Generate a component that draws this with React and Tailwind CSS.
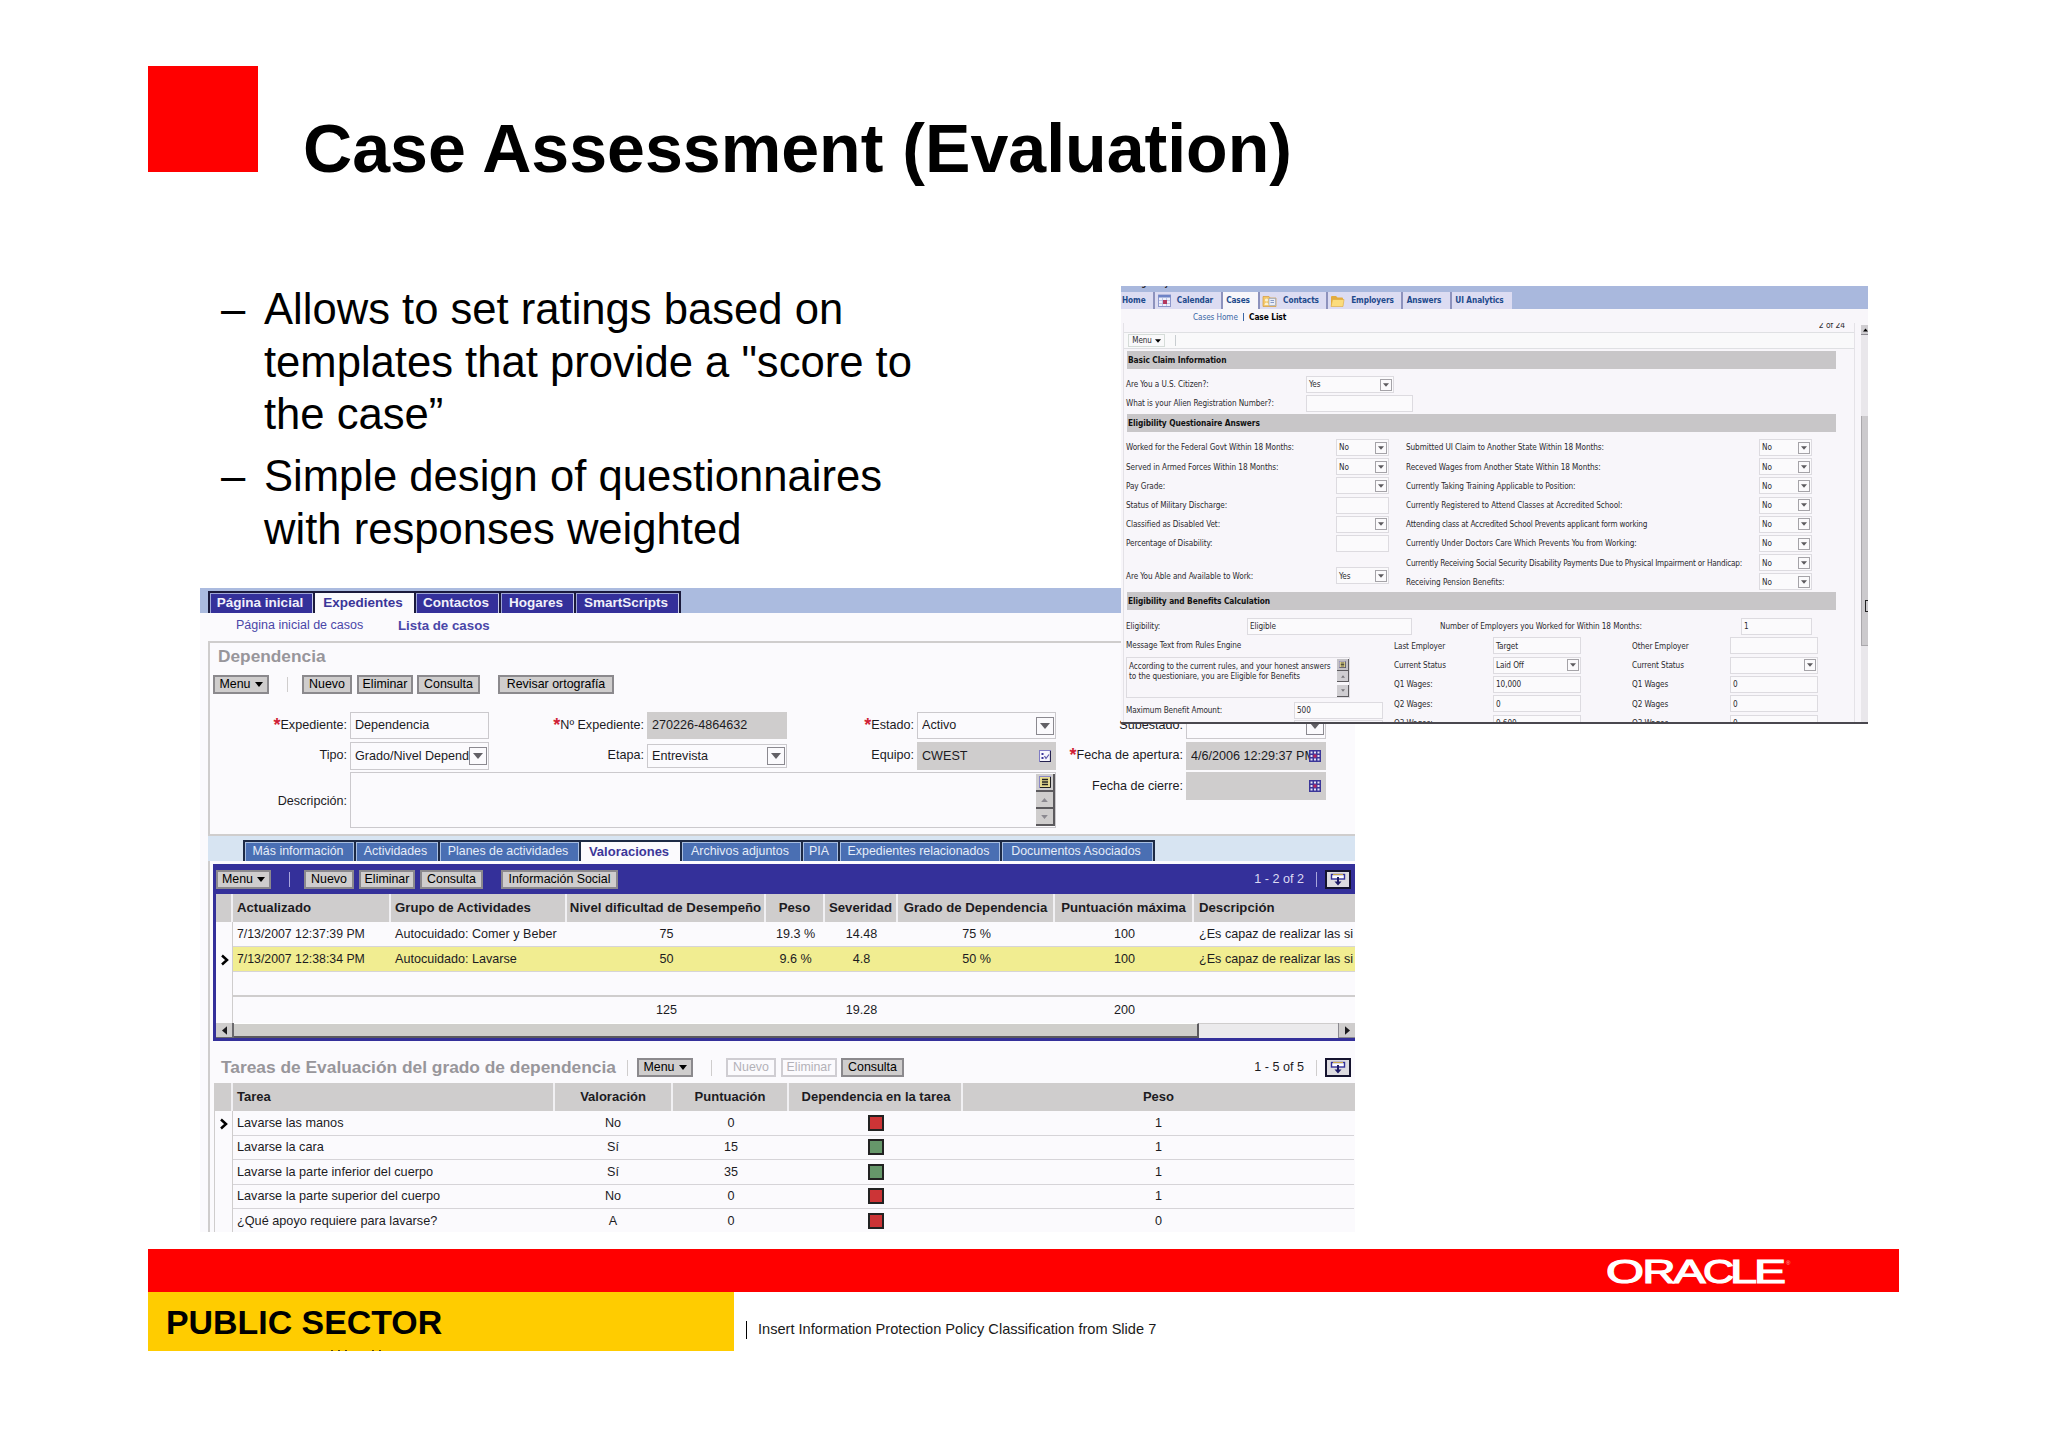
const mainTabs = [
  { label: 'Página inicial', width: 'w-[105px]' },
  { label: 'Expedientes', width: 'w-[101px]', active: true },
  { label: 'Contactos', width: 'w-[85px]' },
  { label: 'Hogares', width: 'w-[75px]' },
  { label: 'SmartScripts', width: 'w-[105px]' },
];

const subTabs = [
  { label: 'Más información', width: 'w-[111px]' },
  { label: 'Actividades', width: 'w-[84px]' },
  { label: 'Planes de actividades', width: 'w-[141px]' },
  { label: 'Valoraciones', width: 'w-[101px]', active: true },
  { label: 'Archivos adjuntos', width: 'w-[121px]' },
  { label: 'PIA', width: 'w-[37px]' },
  { label: 'Expedientes relacionados', width: 'w-[162px]' },
  { label: 'Documentos Asociados', width: 'w-[153px]' },
];

const ratings = [
  { date: '7/13/2007 12:37:39 PM', group: 'Autocuidado: Comer y Beber', level: '75', weight: '19.3 %', severity: '14.48', grade: '75 %', max: '100', desc: '¿Es capaz de realizar las si' },
  { date: '7/13/2007 12:38:34 PM', group: 'Autocuidado: Lavarse', level: '50', weight: '9.6 %', severity: '4.8', grade: '50 %', max: '100', desc: '¿Es capaz de realizar las si', selected: true },
];

const tasks = [
  { name: 'Lavarse las manos', value: 'No', score: '0', ok: false, weight: '1' },
  { name: 'Lavarse la cara', value: 'Sí', score: '15', ok: true, weight: '1' },
  { name: 'Lavarse la parte inferior del cuerpo', value: 'Sí', score: '35', ok: true, weight: '1' },
  { name: 'Lavarse la parte superior del cuerpo', value: 'No', score: '0', ok: false, weight: '1' },
  { name: '¿Qué apoyo requiere para lavarse?', value: 'A', score: '0', ok: false, weight: '0' },
];

const leftQuestions = [
  { label: 'Worked for the Federal Govt Within 18 Months:', value: 'No', select: true },
  { label: 'Served in Armed Forces Within 18 Months:', value: 'No', select: true },
  { label: 'Pay Grade:', value: '', select: true },
  { label: 'Status of Military Discharge:', value: '' },
  { label: 'Classified as Disabled Vet:', value: '', select: true },
  { label: 'Percentage of Disability:', value: '' },
];

const rightQuestions = [
  'Submitted UI Claim to Another State Within 18 Months:',
  'Receved Wages from Another State Within 18 Months:',
  'Currently Taking Training Applicable to Position:',
  'Currently Registered to Attend Classes at Accredited School:',
  'Attending class at Accredited School Prevents applicant form working',
  'Currently Under Doctors Care Which Prevents You from Working:',
  'Currently Receiving Social Security Disability Payments Due to Physical Impairment or Handicap:',
  'Receiving Pension Benefits:',
];

const lastEmployer = [
  { label: 'Last Employer', value: 'Target' },
  { label: 'Current Status', value: 'Laid Off', select: true },
  { label: 'Q1 Wages:', value: '10,000' },
  { label: 'Q2 Wages:', value: '0' },
  { label: 'Q3 Wages:', value: '9,600' },
];

const otherEmployer = [
  { label: 'Other Employer', value: '' },
  { label: 'Current Status', value: '', select: true },
  { label: 'Q1 Wages', value: '0' },
  { label: 'Q2 Wages', value: '0' },
  { label: 'Q3 Wages', value: '0' },
];

const ratingCols = 'grid grid-cols-[17px_158px_176px_199px_59px_73px_157px_139px_161px]';
const taskCols = 'grid grid-cols-[18px_322px_118px_116px_174px_391px]';

/* ---------- icons ---------- */

function Caret({ className }) {
  return (
    <svg viewBox="0 0 10 6" className={className}>
      <path d="M0 0h10L5 6z" fill="currentColor" />
    </svg>
  );
}

function Marker() {
  return (
    <svg viewBox="0 0 9 12" className="ml-0.5 h-3 w-[9px]">
      <path d="M1 1.500L6 6L1 10.500" fill="none" stroke="#000" strokeWidth="2.500" />
    </svg>
  );
}

function CalendarPicker() {
  return (
    <svg viewBox="0 0 12 12" className="h-3 w-3 shrink-0">
      <rect width="12" height="12" fill="#3b3699" />
      <path d="M1.500 1.500h2v2h-2zM5 1.500h2v2H5zM8.500 1.500h2v2h-2zM1.500 5h2v2h-2zM8.500 5h2v2H8.500zM1.500 8.500h2v2h-2zM5 8.500h2v2H5zM8.500 8.500h2v2h-2z" fill="#e4e2f6" />
      <path d="M4.500 4.500h3v3h-3z" fill="#c0265a" />
    </svg>
  );
}

function MultiPick() {
  return (
    <svg viewBox="0 0 12 12" className="h-3 w-3 shrink-0">
      <rect x=".5" y=".5" width="11" height="11" fill="#f7f6fd" stroke="#7f7cc4" />
      <path d="M11.500 1v10.500H1" fill="none" stroke="#25224f" strokeWidth="1.200" />
      <path d="M2.500 3h2v2h-2zM2.500 7h2v2h-2z" fill="#3b3699" />
      <path d="M5.500 6l1.500 2.500L10 4.500" fill="none" stroke="#5b57a8" strokeWidth="1.200" />
    </svg>
  );
}

function NoteIcon({ className }) {
  return (
    <svg viewBox="0 0 12 12" className={className}>
      <rect x=".5" y=".5" width="11" height="11" fill="#e8dc90" stroke="#8a87c8" />
      <path d="M11.500 1v10.500H1" fill="none" stroke="#222" />
      <path d="M3 3.500h6M3 6h6M3 8.500h6" stroke="#222" strokeWidth="1.300" />
    </svg>
  );
}

function ShowMore() {
  return (
    <div className="flex h-[19px] w-[26px] items-center justify-center border-2 border-[#15132f] bg-[#dddbe0]">
      <svg viewBox="0 0 16 13" className="h-[13px] w-4">
        <rect x="1.500" y="1.500" width="13" height="4.500" fill="#fff" stroke="#34309a" strokeWidth="1.400" />
        <path d="M3 1.500h10" stroke="#c9a64a" />
        <path d="M8 4v5" stroke="#1d1a66" strokeWidth="2" />
        <path d="M4.500 8.500h7L8 12.500z" fill="#1d1a66" />
      </svg>
    </div>
  );
}

function TabCalendarIcon() {
  return (
    <svg viewBox="0 0 13 13" className="h-[13px] w-[13px]">
      <rect x=".5" y="1" width="12" height="11.500" fill="#eef0fb" stroke="#8d97cb" />
      <rect x=".5" y="1" width="12" height="2.500" fill="#6d83c6" />
      <path d="M4.500 4v8M8.500 4v8M1 6.500h11M1 9.500h11" stroke="#aab2dc" strokeWidth=".7" />
      <rect x="5" y="6" width="4" height="4" fill="#b3375e" />
    </svg>
  );
}

function TabContactIcon() {
  return (
    <svg viewBox="0 0 15 12" className="h-3 w-[15px]">
      <path d="M1 1.500h6l1 1.500h6v8.500H1z" fill="#f3c86a" stroke="#d59b3e" strokeWidth=".7" />
      <rect x="7" y="3.500" width="6.500" height="7" fill="#e9edf7" stroke="#8ba0c8" strokeWidth=".6" />
      <circle cx="4.500" cy="5" r="1.600" fill="#fbf1d2" />
      <path d="M2.500 10c0-3.500 4-3.500 4 0z" fill="#fbf1d2" />
      <path d="M8.500 5.500h3.500M8.500 7.500h3.500" stroke="#6f86b8" strokeWidth=".8" />
    </svg>
  );
}

function TabFolderIcon() {
  return (
    <svg viewBox="0 0 15 12" className="h-3 w-[15px]">
      <path d="M1 11V2q0-1 1-1h4l1.500 1.500H12q1 0 1 1V11z" fill="#e3ac3f" />
      <path d="M2.500 4.500h11.500l-1 7H1z" fill="#fbdc7c" stroke="#dba63c" strokeWidth=".6" />
    </svg>
  );
}

function OracleLogo() {
  return (
    <svg viewBox="0 0 186 30" className="h-[30px] w-[186px]">
      <text y="27" fill="#fff" stroke="#fff" strokeWidth="1.200" className="font-['Liberation_Sans'] text-[32.500px]">
        <tspan x="-1" textLength="38" lengthAdjust="spacingAndGlyphs">O</tspan>
        <tspan x="35.500" textLength="33" lengthAdjust="spacingAndGlyphs">R</tspan>
        <tspan x="66.500" textLength="32" lengthAdjust="spacingAndGlyphs">A</tspan>
        <tspan x="96" textLength="31" lengthAdjust="spacingAndGlyphs">C</tspan>
        <tspan x="123" textLength="27" lengthAdjust="spacingAndGlyphs">L</tspan>
        <tspan x="147" textLength="32" lengthAdjust="spacingAndGlyphs">E</tspan>
      </text>
      <text x="179" y="9" fill="#ffb0b0" className="font-['Liberation_Sans'] text-[6px]">®</text>
    </svg>
  );
}

/* ---------- lower window ---------- */

function Button({ children, width, menu, disabled, className = '' }) {
  const tone = disabled ? 'border-[#cfcdd2] bg-[#fbfafd] text-[#b3b1b8]' : 'border-[#8b898d] bg-[#cfcdcd] text-black';
  return (
    <button className={`flex h-[19px] shrink-0 items-center justify-center gap-1 border-2 text-[12.400px] leading-none ${tone} ${width} ${className}`}>
      {children}
      {menu && <Caret className="h-[5px] w-2" />}
    </button>
  );
}

function SelectArrow() {
  return (
    <span className="flex h-[18px] w-[18px] shrink-0 items-center justify-center border border-[#8b8990] bg-[#fbfafd] text-[#626066]">
      <Caret className="h-[6px] w-[10px]" />
    </span>
  );
}

function Field({ value, readOnly, select, icon, className = 'h-[27px]' }) {
  return (
    <div className={`flex items-center overflow-hidden border pr-px pl-1 ${readOnly ? 'border-[#cfcdcd] bg-[#cfcdcd]' : 'border-[#cbc9cd] bg-[#fbfafd]'} ${className}`}>
      <span className="min-w-0 flex-1 overflow-hidden whitespace-nowrap">{value}</span>
      {select && <SelectArrow />}
      {icon && <span className="mr-[3px]">{icon}</span>}
    </div>
  );
}

function Label({ children, required }) {
  return (
    <div className="flex h-[27px] items-center justify-end pr-[3px] whitespace-nowrap">
      {required && <span className="h-[19px] text-[18px] leading-none font-bold text-[#d01f36]">*</span>}
      {children}
    </div>
  );
}

function CaseForm() {
  return (
    <div className="mt-[18px] grid grid-cols-[139px_139px_158px_140px_130px_139px_130px_140px] grid-rows-[27px_28px_56px] gap-y-[3px] pl-px text-[12.600px]">
      <Label required>Expediente:</Label>
      <Field value="Dependencia" />
      <Label required>Nº Expediente:</Label>
      <Field value="270226-4864632" readOnly />
      <Label required>Estado:</Label>
      <Field value="Activo" select />
      <Label>Subestado:</Label>
      <Field value="" select />

      <Label>Tipo:</Label>
      <Field value="Grado/Nivel Depend" select className="h-7" />
      <Label>Etapa:</Label>
      <Field value="Entrevista" select className="mt-0.5 h-6" />
      <Label>Equipo:</Label>
      <Field value="CWEST" readOnly icon={<MultiPick />} className="h-7" />
      <Label required>Fecha de apertura:</Label>
      <Field value="4/6/2006 12:29:37 PM" readOnly icon={<CalendarPicker />} className="h-7" />

      <div className="flex items-center justify-end pr-[3px]">Descripción:</div>
      <div className="col-span-5 -mt-px flex h-[56px] justify-end border border-[#cbc9cd] bg-[#fbfafd] pt-px">
        <div className="flex w-[19px] flex-col">
          <div className="flex h-[18px] items-center justify-center border-r-2 border-b-2 border-[#5c5a5e] bg-[#cfcdcd]"><NoteIcon className="h-3 w-3" /></div>
          <div className="flex h-[17px] items-center justify-center border-r-2 border-b-2 border-[#5c5a5e] bg-[#cfcdcd] text-[#8b8990]"><Caret className="h-1 w-[7px] rotate-180" /></div>
          <div className="flex h-[17px] items-center justify-center border-r-2 border-b-2 border-[#5c5a5e] bg-[#cfcdcd] text-[#8b8990]"><Caret className="h-1 w-[7px]" /></div>
        </div>
      </div>
      <Label>Fecha de cierre:</Label>
      <Field value="" readOnly icon={<CalendarPicker />} className="-mt-px h-7" />
    </div>
  );
}

function RatingsApplet() {
  const head = 'flex h-7 items-center justify-center border-r-2 border-[#f1f0f3] whitespace-nowrap';
  return (
    <div className="ml-[3px] h-[177px] w-[1142px] border-b-[3px] border-l-[3px] border-[#34309a] text-[12.600px]">
      <div className="flex h-[30px] items-center bg-[#34309a]">
        <Button menu width="w-[55px]">Menu</Button>
        <span className="ml-[18px] h-[15px] w-px bg-[#a9a6dd]" />
        <Button width="w-[50px]" className="ml-[14px]">Nuevo</Button>
        <Button width="w-[56px]" className="ml-[5px]">Eliminar</Button>
        <Button width="w-[63px]" className="ml-[5px]">Consulta</Button>
        <Button width="w-[117px]" className="ml-[18px]">Información Social</Button>
        <span className="ml-auto text-[#dcdaf3]">1 - 2 of 2</span>
        <span className="mr-2 ml-3 h-[15px] w-px bg-[#a9a6dd]" />
        <span className="mr-1"><ShowMore /></span>
      </div>

      <div className={`${ratingCols} overflow-hidden bg-[#cfcdcd] text-[13.200px] font-bold`}>
        <div className={head} />
        <div className={`${head} justify-start! pl-1`}>Actualizado</div>
        <div className={`${head} justify-start! pl-1`}>Grupo de Actividades</div>
        <div className={head}>Nivel dificultad de Desempeño</div>
        <div className={head}>Peso</div>
        <div className={head}>Severidad</div>
        <div className={head}>Grado de Dependencia</div>
        <div className={head}>Puntuación máxima</div>
        <div className="flex h-7 items-center pl-[5px]">Descripción</div>
      </div>

      {ratings.map(r => (
        <div key={r.date} className={`${ratingCols} h-[25px] overflow-hidden text-center leading-[24px]`}>
          <div className="flex items-center justify-center border-r border-[#cfcdcd]">{r.selected && <Marker />}</div>
          <div className={`col-span-8 grid grid-cols-subgrid border-b border-[#d6d4d8] whitespace-nowrap ${r.selected ? 'bg-[#f1ed91]' : ''}`}>
            <div className="pl-1 text-left text-[12.300px]">{r.date}</div>
            <div className="pl-1 text-left">{r.group}</div>
            <div>{r.level}</div>
            <div>{r.weight}</div>
            <div>{r.severity}</div>
            <div>{r.grade}</div>
            <div>{r.max}</div>
            <div className="overflow-hidden pl-[5px] text-left">{r.desc}</div>
          </div>
        </div>
      ))}

      <div className="ml-4 h-[25px] border-b-2 border-l border-[#cfcdcd]" />
      <div className={`${ratingCols} h-[26px] text-center leading-[26px]`}>
        <div className="border-r border-[#cfcdcd]" />
        <div className="col-span-8 grid grid-cols-subgrid border-b border-[#cfcdcd]">
          <div className="col-start-3">125</div>
          <div className="col-start-5">19.28</div>
          <div className="col-start-7">200</div>
        </div>
      </div>

      <div className="flex h-[15px] bg-[#ebeaec]">
        <div className="flex w-[18px] items-center justify-center border-r-2 border-b border-[#6b696d] bg-[#cfcdcd]"><Caret className="h-[5px] w-[9px] rotate-90" /></div>
        <div className="w-[965px] border-t border-r-2 border-b-2 border-t-white border-r-[#5c5a5e] border-b-[#5c5a5e] bg-[#cfcecb]" />
        <div className="ml-auto flex w-[17px] items-center justify-center border-b border-l border-[#8b8990] bg-[#cfcdcd]"><Caret className="h-[5px] w-[9px] -rotate-90" /></div>
      </div>
    </div>
  );
}

function TasksApplet() {
  const head = 'flex items-center justify-center border-r-2 border-[#f1f0f3]';
  return (
    <div className="text-[12.600px]">
      <div className="flex h-[42px] items-center pt-[11px] pl-[11px]">
        <span className="w-[396px] text-[17.350px] leading-none font-bold whitespace-nowrap text-[#98969b]">Tareas de Evaluación del grado de dependencia</span>
        <span className="ml-[10px] h-4 w-px bg-[#cfcdcd]" />
        <Button menu width="w-[56px]" className="ml-[9px]">Menu</Button>
        <span className="ml-[18px] h-4 w-px bg-[#cfcdcd]" />
        <Button disabled width="w-[50px]" className="ml-[14px]">Nuevo</Button>
        <Button disabled width="w-[56px]" className="ml-[5px]">Eliminar</Button>
        <Button width="w-[63px]" className="ml-1">Consulta</Button>
        <span className="ml-auto">1 - 5 of 5</span>
        <span className="mr-2 ml-3 h-4 w-px bg-[#cfcdcd]" />
        <span className="mr-1"><ShowMore /></span>
      </div>

      <div className="ml-[4px] border-l border-[#cfcdcd]">
        <div className={`${taskCols} h-[28px] bg-[#cfcdcd] text-[13px] font-bold`}>
          <div className={head} />
          <div className={`${head} justify-start! pl-1`}>Tarea</div>
          <div className={head}>Valoración</div>
          <div className={head}>Puntuación</div>
          <div className={`${head} pl-0.5`}>Dependencia en la tarea</div>
          <div className="flex items-center justify-center">Peso</div>
        </div>
        {tasks.map((t, i) => (
          <div key={t.name} className={`${taskCols} h-[24.400px] text-center leading-[24px]`}>
            <div className="flex items-center justify-center border-r border-[#cfcdcd]">{i === 0 && <Marker />}</div>
            <div className={`col-span-5 grid grid-cols-subgrid ${i < tasks.length - 1 ? 'border-b border-[#d6d4d8]' : ''}`}>
              <div className="pl-1 text-left text-[12.700px]">{t.name}</div>
              <div className="pr-0.5">{t.value}</div>
              <div>{t.score}</div>
              <div className="flex items-center justify-center">
                <span className={`h-4 w-4 border-2 border-[#222] ${t.ok ? 'bg-[#66976a]' : 'bg-[#cc3436]'}`} />
              </div>
              <div>{t.weight}</div>
            </div>
          </div>
        ))}
      </div>
    </div>
  );
}

function DependencyWindow() {
  return (
    <div className="ml-[200px] h-[644px] w-[1155px] overflow-hidden bg-[#fbfafd] text-[#1c1b1f]">
      <div className="flex h-[25px] items-end bg-[#abbbdf] pl-2">
        {mainTabs.map(t => (
          <div
            key={t.label}
            className={`flex h-[22px] items-center justify-center border-t-2 border-l-2 pr-[3px] text-[13.500px] font-bold ${t.active ? 'border-[#1b1a3c] bg-[#fbfafd] text-[#3b3699]' : 'border-[#1b1a3c] bg-[#34309a] text-[#f1f0fb] shadow-[inset_1px_1px_0_#9fa6d8,inset_-1px_0_0_#c8ccec]'} ${t.width}`}
          >
            {t.label}
          </div>
        ))}
        <span className="h-[22px] w-0.5 bg-[#1b1a3c]" />
      </div>
      <div className="flex h-[28px] items-center pb-[3px] pl-9 text-[12.500px] text-[#4a46a8]">
        <span className="w-[162px]">Página inicial de casos</span>
        <span className="text-[13.300px] font-bold">Lista de casos</span>
      </div>

      <div className="ml-[8px] h-[591px] border-l-2 border-[#cfcdcd]">
        <div className="h-[195px] border-y-2 border-[#cfcdcd]">
          <div className="pt-1 pl-2 text-[17.300px] leading-[18px] font-bold text-[#98969b]">Dependencia</div>
          <div className="mt-[10px] flex items-center pl-[3px]">
            <Button menu width="w-[56px]">Menu</Button>
            <span className="ml-[18px] h-[15px] w-px bg-[#cfcdcd]" />
            <Button width="w-[50px]" className="ml-[14px]">Nuevo</Button>
            <Button width="w-[56px]" className="ml-[5px]">Eliminar</Button>
            <Button width="w-[63px]" className="ml-1">Consulta</Button>
            <Button width="w-[116px]" className="ml-[18px]">Revisar ortografía</Button>
          </div>
          <CaseForm />
        </div>

        <div className="-ml-0.5 flex h-[25px] items-end bg-[#d7e4f2] pl-[35px] text-[12.400px]">
          {subTabs.map(t => (
            <div
              key={t.label}
              className={`flex h-[21px] items-center justify-center border-t-2 border-l-2 border-[#1d2a45] pr-[3px] whitespace-nowrap ${t.active ? 'bg-[#fbfafd] text-[13px] font-bold text-[#3b3699]' : 'bg-[#4a6fb3] text-[#e6edf9] shadow-[inset_1px_1px_0_#a9bfe2,inset_-1px_0_0_#a9bfe2]'} ${t.width}`}
            >
              {t.label}
            </div>
          ))}
          <span className="h-[21px] w-0.5 bg-[#1d2a45]" />
        </div>
        <div className="pt-[3px]">
          <RatingsApplet />
        </div>
        <TasksApplet />
      </div>
    </div>
  );
}

/* ---------- upper window ---------- */

function SmallField({ value, select, width, className = 'h-[17px]' }) {
  return (
    <div className={`flex shrink-0 items-center border border-[#dddbe0] bg-[#fbfafc] pr-px pl-[2px] ${width} ${className}`}>
      <span className="flex-1 whitespace-nowrap">{value}</span>
      {select && (
        <span className="flex h-3 w-3 items-center justify-center border border-[#a5a3a8] text-[#5c5a5e]">
          <Caret className="h-1 w-1.5" />
        </span>
      )}
    </div>
  );
}

function SectionBar({ children }) {
  return <div className="ml-[6px] flex h-[18px] w-[709px] items-center bg-[#c8c6c8] pl-px text-[8.300px] font-bold tracking-[-0.010em] text-[#111]">{children}</div>;
}

function ClaimTab({ children, width, active }) {
  return (
    <div className={`flex h-[17px] items-center justify-center gap-1.5 border-l-2 pr-[5px] ${active ? 'border-[#8d92bd] bg-[#f8f6fa]' : 'border-[#8d92bd] bg-[#dcdcf2]'} ${width}`}>
      {children}
    </div>
  );
}

function EmployerColumn({ rows, width, fieldWidth }) {
  return (
    <div>
      {rows.map(r => (
        <div key={r.label} className="flex h-[19.400px] items-center">
          <span className={`whitespace-nowrap ${width}`}>{r.label}</span>
          <SmallField value={r.value} select={r.select} width={fieldWidth} className="h-[17px]" />
        </div>
      ))}
    </div>
  );
}

function ClaimWindow() {
  return (
    <div className="absolute top-[286px] left-[1121px] h-[438px] w-[747px] overflow-hidden border-b-2 border-[#4a484f] bg-[#f8f6fa] font-['DejaVu_Sans_Condensed','DejaVu_Sans',sans-serif] text-[8.150px] tracking-[-0.010em] text-[#2b2a2e]">
      <div className="h-[6px] overflow-hidden bg-[#a9b8dd]">
        <div className="-mt-[7px] pl-px text-[8px] leading-[10px] font-bold">al Eligibility Item</div>
      </div>
      <div className="flex h-[17px] bg-[#a9b8dd] text-[8.200px] font-bold tracking-[-0.010em] text-[#1e4a8c]">
        <div className="w-8 bg-[#dcdcf2] pl-px leading-[17px]">Home</div>
        <ClaimTab width="w-[68px]"><TabCalendarIcon />Calendar</ClaimTab>
        <ClaimTab active width="w-[37px]">Cases</ClaimTab>
        <ClaimTab width="w-[68px]"><TabContactIcon />Contacts</ClaimTab>
        <ClaimTab width="w-[75px]"><TabFolderIcon />Employers</ClaimTab>
        <ClaimTab width="w-[49px]">Answers</ClaimTab>
        <ClaimTab width="w-[62px]">UI Analytics</ClaimTab>
      </div>
      <div className="flex h-[14px] items-center pt-0.5 pl-[72px]">
        <span className="w-[50px] whitespace-nowrap text-[#3a66a5]">Cases Home</span>
        <span className="h-2 w-px bg-[#3a66a5]" />
        <span className="ml-[5px] text-[8.300px] font-bold text-black">Case List</span>
      </div>

      <div className="flex h-[399px]">
        <div className="ml-0.5 w-[732px] border-x border-[#e4e2e7]">
          <div className="flex h-[10px] justify-end overflow-hidden border-b border-[#dfe0e3] pr-[9px]">
            <span className="h-[6px] overflow-hidden text-[8.500px]"><span className="-mt-[3px] block leading-[10px]">2 of 24</span></span>
          </div>
          <div className="flex h-4 items-center border-b border-[#dfe0e3] bg-[#f9f9fa] pl-1">
            <span className="flex h-[13px] w-[37px] items-center justify-center gap-[3px] border border-[#d5dcd8] text-[8px]">Menu<Caret className="h-1 w-1.5 text-black" /></span>
            <span className="ml-[10px] h-[11px] w-px bg-[#c8cdd0]" />
          </div>

          <div className="-ml-[3px]">
            <div className="pt-0.5"><SectionBar>Basic Claim Information</SectionBar></div>
            <div className="h-[45px] pt-[6px] pl-[5px]">
              <div className="flex h-[19px] items-center">
                <span className="w-[180px]">Are You a U.S. Citizen?:</span>
                <SmallField value="Yes" select width="w-[88px]" />
              </div>
              <div className="flex h-[19px] items-center">
                <span className="w-[180px]">What is your Alien Registration Number?:</span>
                <SmallField value="" width="w-[107px]" />
              </div>
            </div>

            <SectionBar>Eligibility Questionaire Answers</SectionBar>
            <div className="flex h-[160px] pt-[6px] pl-[5px]">
              <div className="w-[280px]">
                {leftQuestions.map(q => (
                  <div key={q.label} className="flex h-[19.200px] items-center">
                    <span className="w-[210px] whitespace-nowrap">{q.label}</span>
                    <SmallField value={q.value} select={q.select} width="w-[53px]" />
                  </div>
                ))}
                <div className="mt-[13px] flex h-[19px] items-center">
                  <span className="w-[210px]">Are You Able and Available to Work:</span>
                  <SmallField value="Yes" select width="w-[53px]" />
                </div>
              </div>
              <div>
                {rightQuestions.map(q => (
                  <div key={q} className="flex h-[19.200px] items-center">
                    <span className={`w-[353px] whitespace-nowrap ${q.length > 65 ? 'tracking-[-0.024em]' : ''}`}>{q}</span>
                    <SmallField value="No" select width="w-[53px]" />
                  </div>
                ))}
              </div>
            </div>

            <SectionBar>Eligibility and Benefits Calculation</SectionBar>
            <div className="mt-[6px] flex h-[20px] items-center pl-[5px]">
              <span className="w-[121px]">Eligibility:</span>
              <SmallField value="Eligible" width="w-[165px]" />
              <span className="ml-7 w-[301px]">Number of Employers you Worked for Within 18 Months:</span>
              <SmallField value="1" width="w-[71px]" />
            </div>
            <div className="flex pl-[5px]">
              <div className="w-[268px]">
                <div className="flex h-[19px] items-center">Message Text from Rules Engine</div>
                <div className="mt-0.5 flex h-[41px] w-[224px] justify-between border border-[#dddbe0] pt-[3px] pl-0.5">
                  <p className="leading-[10px] whitespace-nowrap">According to the current rules, and your honest answers<br />to the questioniare, you are Eligible for Benefits</p>
                  <div className="-mt-[2px] flex w-3 flex-col">
                    <span className="flex h-3 items-center justify-center border-r border-b border-[#5c5a5e] bg-[#c4c2c6]"><NoteIcon className="h-[7px] w-[7px]" /></span>
                    <span className="flex h-[11px] items-center justify-center border-r border-b border-[#5c5a5e] bg-[#cfcdd1] text-[#77757a]"><Caret className="h-[3px] w-1 rotate-180" /></span>
                    <span className="mt-[3px] flex h-3 items-center justify-center border-r border-b border-[#5c5a5e] bg-[#cfcdd1] text-[#77757a]"><Caret className="h-[3px] w-1" /></span>
                  </div>
                </div>
                <div className="mt-[3px] flex h-[19px] items-center">
                  <span className="w-[168px]">Maximum Benefit Amount:</span>
                  <SmallField value="500" width="w-[89px]" />
                </div>
                <div className="ml-[168px] h-4 w-[89px] border border-[#dddbe0]" />
              </div>
              <div className="w-[238px]">
                <EmployerColumn rows={lastEmployer} width="w-[99px]" fieldWidth="w-[88px]" />
              </div>
              <EmployerColumn rows={otherEmployer} width="w-[98px]" fieldWidth="w-[88px]" />
            </div>
          </div>
        </div>

        <div className="mt-0.5 ml-[6px] w-[7px] bg-[#e9e7eb]">
          <div className="flex h-[10px] items-center justify-end border-b border-[#8b8990] bg-[#cfcdd1]"><Caret className="h-1 w-[5px] rotate-180 text-black" /></div>
          <div className="mt-[81px] flex h-[230px] items-center justify-end border-b border-l border-[#a9a7ab] bg-[#cccacd]">
            <span className="mt-[150px] h-3 w-[3px] border-y border-l border-[#222]" />
          </div>
        </div>
      </div>
    </div>
  );
}

export default function App() {
  return (
    <div className="relative h-[1447px] w-[2048px] overflow-hidden bg-white pt-[66px] font-['Liberation_Sans',Arial,sans-serif] text-black">
      <header className="flex h-[106px] pl-[148px]">
        <div className="w-[110px] bg-[#ff0000]" />
        <h1 className="mt-[48px] ml-[45px] text-[68.100px] leading-[68px] font-bold whitespace-nowrap">Case Assessment (Evaluation)</h1>
      </header>

      <ul className="mt-[111px] flex h-[273px] flex-col gap-[9.500px] pl-[221px] text-[43.600px] leading-[52.500px]">
        <li className="flex"><span className="w-[43px]">–</span><p>Allows to set ratings based on<br />templates that provide a "score to<br />the case”</p></li>
        <li className="flex"><span className="w-[43px]">–</span><p>Simple design of questionnaires<br />with responses weighted</p></li>
      </ul>

      <div className="mt-8">
        <DependencyWindow />
      </div>

      <footer className="mt-[17px] ml-[148px] w-[1751px]">
        <div className="flex h-[43px] items-center justify-end bg-[#ff0000] pr-[106px]">
          <OracleLogo />
        </div>
        <div className="flex h-[59px] items-center">
          <div className="flex h-[59px] w-[586px] flex-col justify-between bg-[#ffcc00] pl-[18px]">
            <span className="pt-[11px] text-[33.900px] leading-[38px] font-bold">PUBLIC SECTOR</span>
            <span className="ml-[165px] flex h-px gap-[5px]">
              <i className="w-0.5 bg-[#5c4a00]" />
              <i className="w-0.5 bg-[#5c4a00]" />
              <i className="w-0.5 bg-[#5c4a00]" />
              <i className="ml-5 w-0.5 bg-[#5c4a00]" />
              <i className="w-0.5 bg-[#5c4a00]" />
            </span>
          </div>
          <span className="mt-[17px] ml-3 h-[18px] w-px bg-black" />
          <span className="mt-[16px] ml-[11px] text-[14.600px] text-[#1a1a1a]">Insert Information Protection Policy Classification from Slide 7</span>
        </div>
      </footer>

      <ClaimWindow />
    </div>
  );
}
